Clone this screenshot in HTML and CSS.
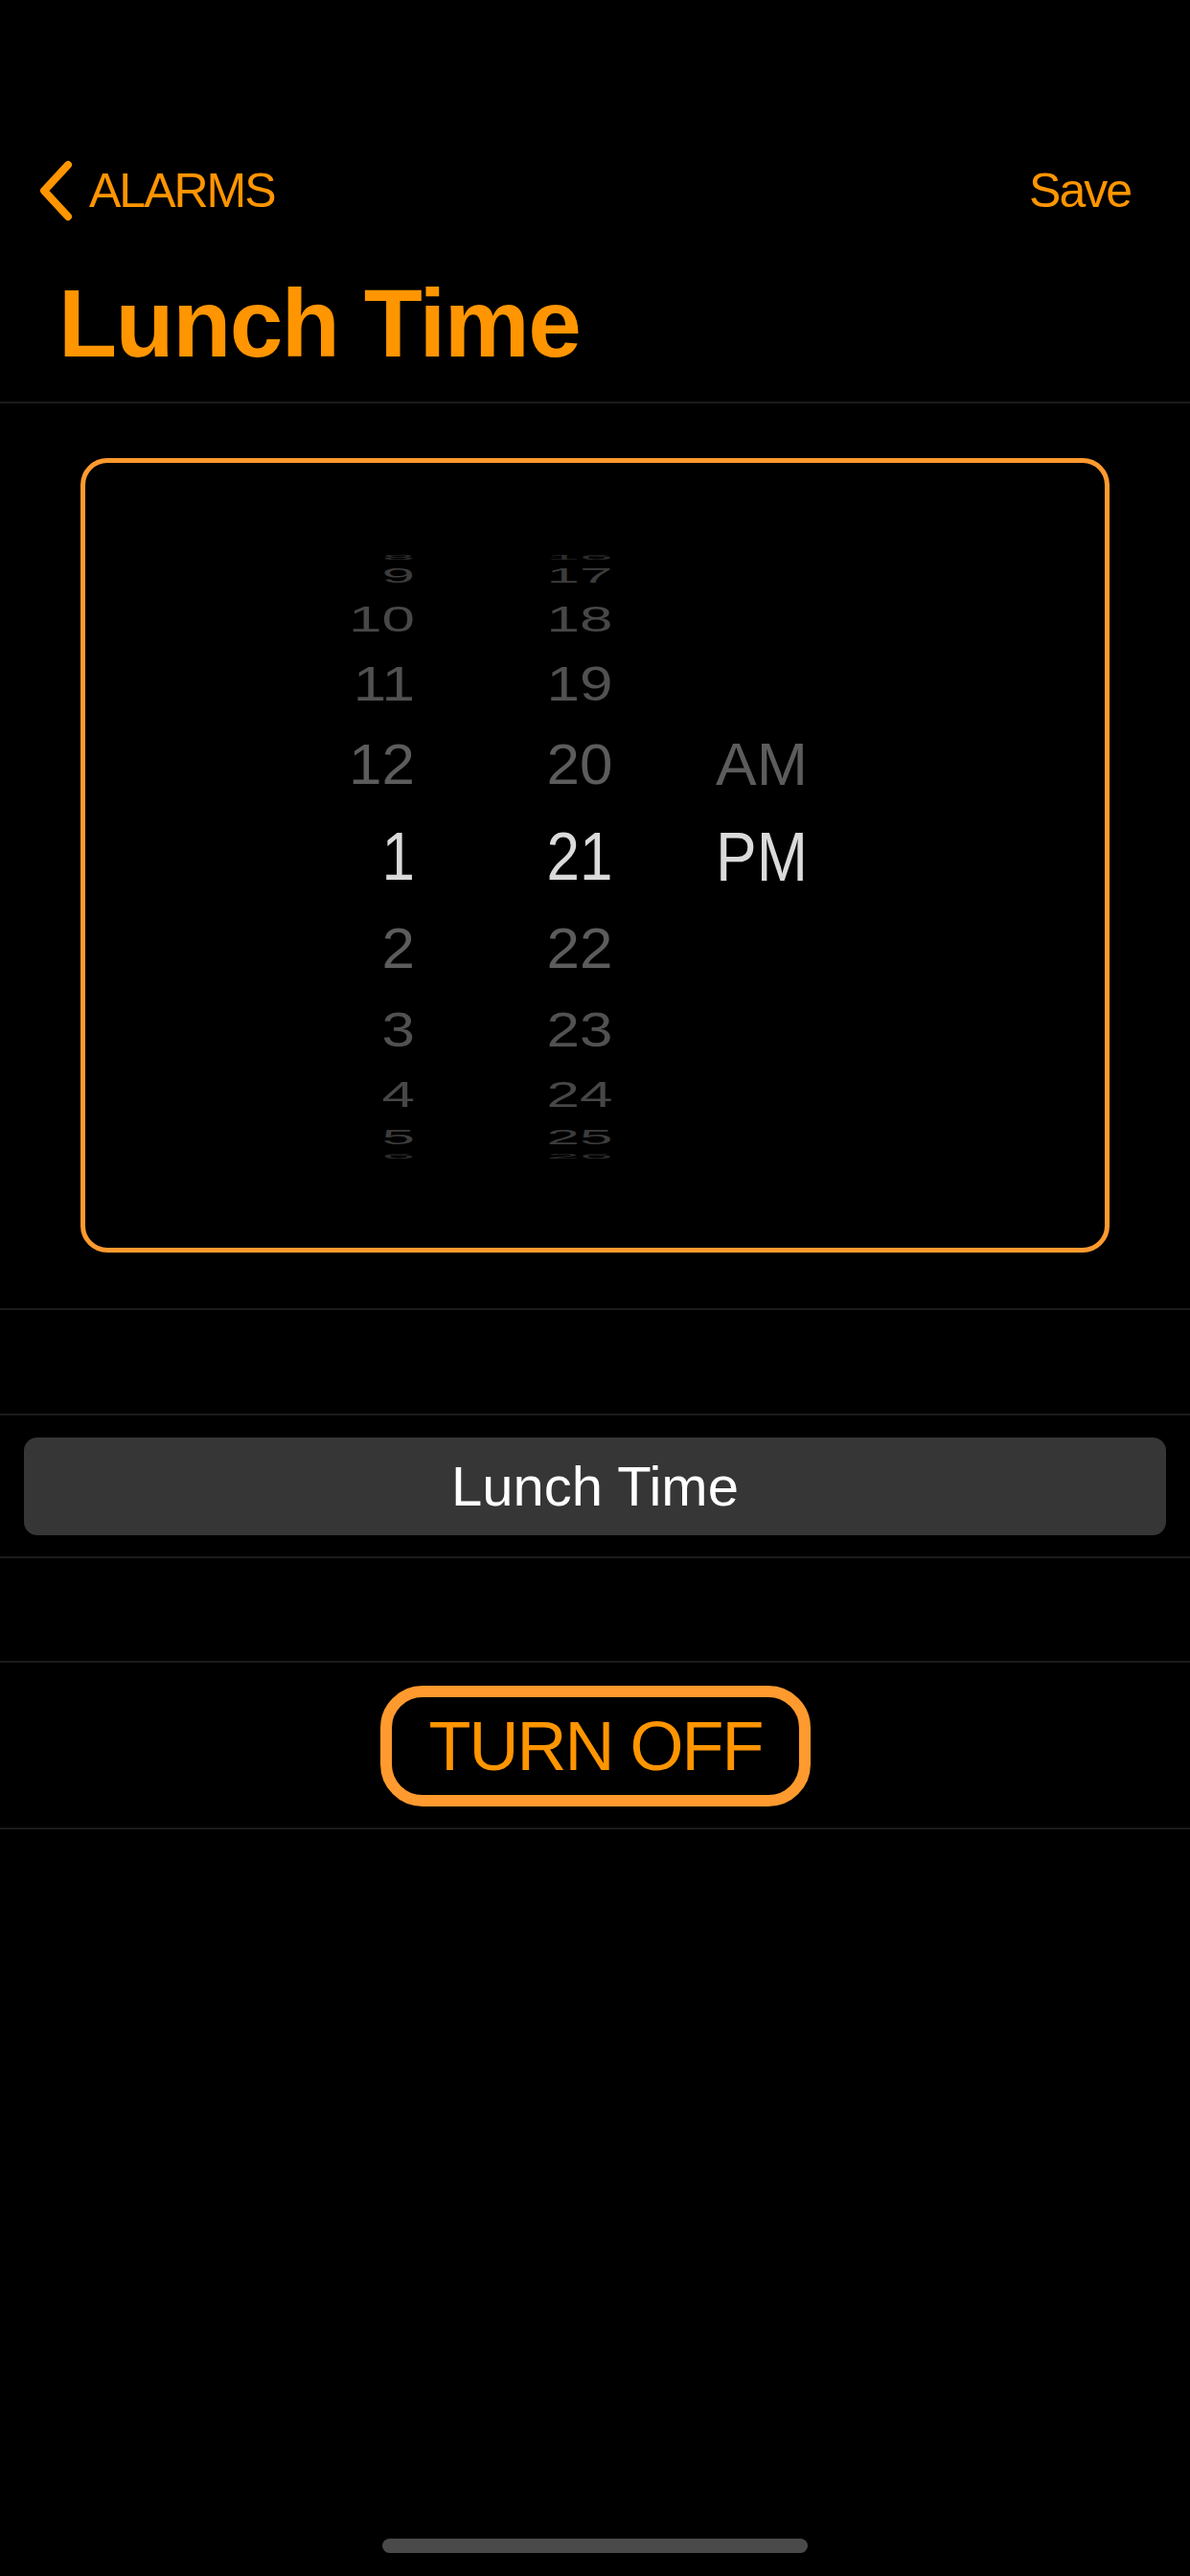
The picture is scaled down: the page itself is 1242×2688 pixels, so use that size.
FILE: index.html
```html
<!DOCTYPE html>
<html lang="en">
<head>
<meta charset="utf-8">
<title>Lunch Time</title>
<link rel="stylesheet" href="styles.css">
</head>
<body>
<div class="screen">
  <header class="header">
    <nav class="nav">
      <div class="back">
        <svg class="chev" width="44" height="70" viewBox="0 0 44 70"><path d="M35 8 L10 35 L35 62" fill="none" stroke="#FF9500" stroke-width="8" stroke-linecap="round" stroke-linejoin="round"/></svg>
        <span class="nav-label">ALARMS</span>
      </div>
      <span class="save">Save</span>
    </nav>
    <h1 class="title">Lunch Time</h1>
  </header>

  <section class="picker-section">
    <div class="picker">
      <div class="wheel">
        <div class="col hours">
          <div class="r d5">8</div>
          <div class="r d4">9</div>
          <div class="r d3">10</div>
          <div class="r d2">11</div>
          <div class="r d1">12</div>
          <div class="r d0">1</div>
          <div class="r d1">2</div>
          <div class="r d2">3</div>
          <div class="r d3">4</div>
          <div class="r d4">5</div>
          <div class="r d5">6</div>
        </div>
        <div class="col minutes">
          <div class="r d5">16</div>
          <div class="r d4">17</div>
          <div class="r d3">18</div>
          <div class="r d2">19</div>
          <div class="r d1">20</div>
          <div class="r d0">21</div>
          <div class="r d1">22</div>
          <div class="r d2">23</div>
          <div class="r d3">24</div>
          <div class="r d4">25</div>
          <div class="r d5">26</div>
        </div>
        <div class="col ampm">
          <div class="r d5"></div>
          <div class="r d4"></div>
          <div class="r d3"></div>
          <div class="r d2"></div>
          <div class="r d1">AM</div>
          <div class="r d0">PM</div>
          <div class="r d1"></div>
          <div class="r d2"></div>
          <div class="r d3"></div>
          <div class="r d4"></div>
          <div class="r d5"></div>
        </div>
      </div>
    </div>
  </section>

  <section class="spacer spacer-a"></section>

  <section class="field-section">
    <div class="field">Lunch Time</div>
  </section>

  <section class="spacer spacer-b"></section>

  <section class="button-section">
    <div class="turn-off">TURN OFF</div>
  </section>

  <div class="home-indicator"></div>
</div>
</body>
</html>
```

FILE: styles.css
```css
html, body {
  margin: 0;
  padding: 0;
  background: #000;
}

body {
  width: 1242px;
  height: 2688px;
  overflow: hidden;
  font-family: "Liberation Sans", Arial, sans-serif;
}

.screen {
  width: 1242px;
  height: 2688px;
  display: flex;
  flex-direction: column;
  background: #000;
}

/* Header */
.header {
  padding: 149px 62px 32px 0;
  border-bottom: 2px solid #1b1b1c;
}

.nav {
  height: 100px;
  display: flex;
  align-items: center;
  justify-content: space-between;
}

.back {
  display: flex;
  align-items: center;
  padding-left: 36px;
}

.chev {
  display: block;
  margin-right: 13px;
}

.nav-label,
.save {
  color: #FF9500;
  font-size: 50px;
  line-height: 1;
  letter-spacing: -2px;
}

.title {
  margin: 38px 0 0 0;
  padding-left: 61px;
  color: #FF9500;
  font-size: 100px;
  font-weight: 700;
  line-height: 1;
  letter-spacing: -1.5px;
}

/* Picker */
.picker-section {
  padding: 57px 84px 58px 84px;
  border-bottom: 2px solid #1b1b1c;
}

.picker {
  box-sizing: border-box;
  height: 829px;
  border: 5px solid #FF9A2E;
  border-radius: 28px;
  padding: 93px 0 0 242px;
}

.wheel {
  display: flex;
}

.col {
  display: flex;
  flex-direction: column;
}

.hours {
  width: 102px;
}

.minutes {
  width: 100px;
  margin-left: 122px;
}

.ampm {
  width: 150px;
  margin-left: 92px;
}

.r {
  display: flex;
  align-items: center;
  font-size: 62px;
  line-height: 1;
  white-space: nowrap;
  transform-origin: center center;
}

.hours .r { justify-content: flex-end; }
.minutes .r { justify-content: center; }
.ampm .r { justify-content: flex-start; font-size: 64px; }

.d0 { height: 96px; color: #dadada; transform: scaleY(1.13); }
.d1 { height: 96px; color: #5c5c5c; transform: scaleY(0.97); }
.d2 { height: 73px; color: #515151; transform: scaleY(0.81); }
.d3 { height: 62px; color: #474747; transform: scaleY(0.61); }
.d4 { height: 28px; color: #3c3c3c; transform: scaleY(0.35); }
.d5 { height: 11px; color: #2c2c2c; transform: scaleY(0.12); }

/* Rows */
.spacer {
  border-bottom: 2px solid #1b1b1c;
}

.spacer-a { height: 108px; }
.spacer-b { height: 107px; }

.field-section {
  padding: 23px 25px 22px 25px;
  border-bottom: 2px solid #1b1b1c;
}

.field {
  height: 102px;
  background: #363636;
  border-radius: 14px;
  display: flex;
  align-items: center;
  justify-content: center;
  color: #ffffff;
  font-size: 58px;
  line-height: 1;
}

.button-section {
  padding: 24px 0 22px 0;
  display: flex;
  justify-content: center;
  border-bottom: 2px solid #1b1b1c;
}

.turn-off {
  box-sizing: border-box;
  width: 449px;
  height: 126px;
  margin-left: 1px;
  border: 12px solid #FF9A2E;
  border-radius: 44px;
  display: flex;
  align-items: center;
  justify-content: center;
  color: #FF9500;
  font-size: 72px;
  line-height: 1;
  letter-spacing: -2px;
}

.home-indicator {
  width: 444px;
  height: 15px;
  margin: 740px auto 0 auto;
  border-radius: 8px;
  background: #4a4a4a;
}
```
